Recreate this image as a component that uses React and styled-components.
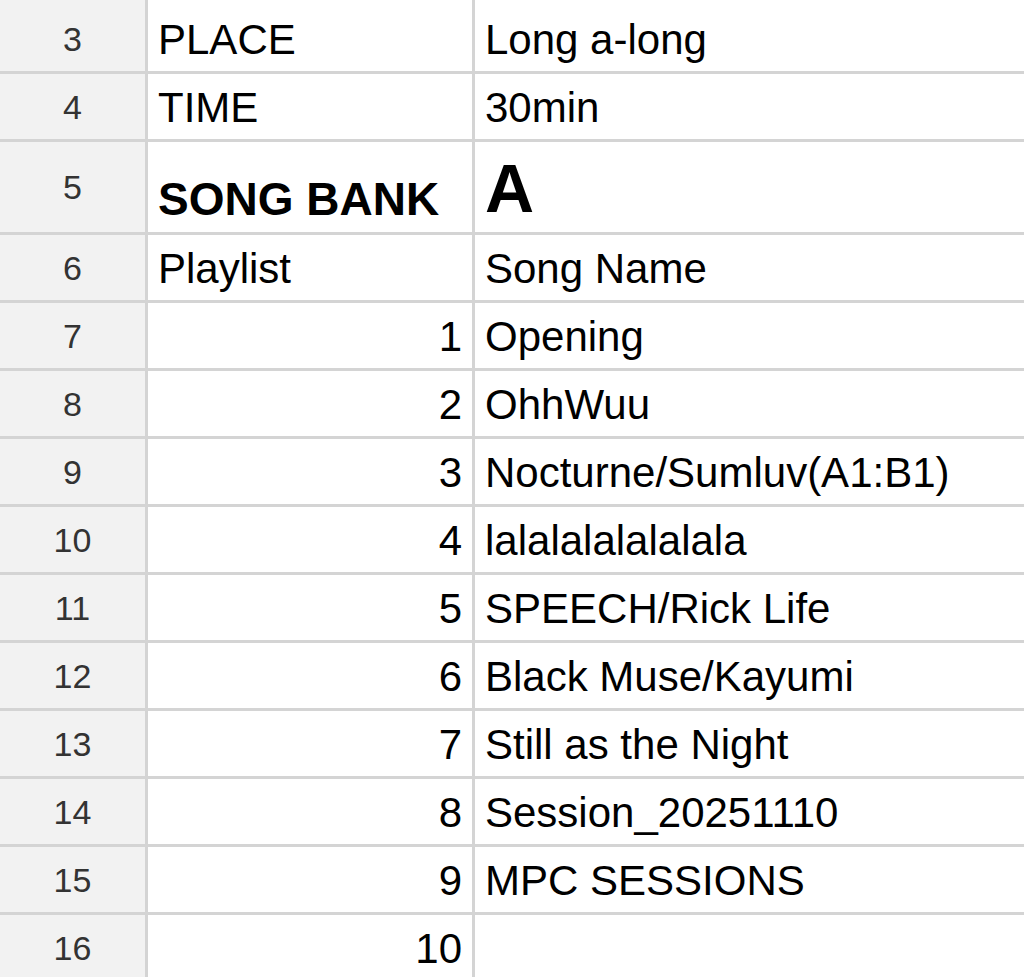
import React from 'react';
import styled, { createGlobalStyle } from 'styled-components';

// ================= style ======================= //
const GlobalStyle = createGlobalStyle`
    html, body {
        margin: 0;
        padding: 0;
        background: #ffffff;
        overflow: hidden;
    }
    body {
        font-family: "Liberation Sans", Arial, Helvetica, sans-serif;
    }
`;

const Sheet = styled.div`
    display: flex;
    flex-direction: column;
    gap: 3px;
    width: 1024px;
    height: 977px;
    overflow: hidden;
    background-color: #d4d4d4;
`;

const Row = styled.div`
    display: grid;
    grid-template-columns: 145px 324px 1fr;
    gap: 3px;
    flex: 0 0 ${(props) => props.h}px;
    height: ${(props) => props.h}px;
`;

const RowHeader = styled.div`
    display: flex;
    align-items: center;
    justify-content: center;
    background-color: #f2f2f2;
    color: #333333;
    font-size: 34px;
    line-height: 1;
`;

const Cell = styled.div`
    display: flex;
    align-items: flex-end;
    justify-content: ${(props) => props.right ? 'flex-end' : 'flex-start'};
    padding: 0 10px 10px 10px;
    background-color: #ffffff;
    color: #000000;
    font-size: ${(props) => props.size || 42}px;
    font-weight: ${(props) => props.bold ? 700 : 400};
    line-height: 1;
    white-space: nowrap;
    overflow: hidden;
`;

// ================= data ======================= //
const songs = [
    'Opening',
    'OhhWuu',
    'Nocturne/Sumluv(A1:B1)',
    'lalalalalalalala',
    'SPEECH/Rick Life',
    'Black Muse/Kayumi',
    'Still as the Night',
    'Session_20251110',
    'MPC SESSIONS',
    '',
];

// ================= component ======================= //
const App = () => {
    const renderSongs = () => {
        return songs.map((name, i) => (
            <Row h={65} key={i}>
                <RowHeader>{i + 7}</RowHeader>
                <Cell right>{i + 1}</Cell>
                <Cell>{name}</Cell>
            </Row>
        ));
    };

    return (
        <>
            <GlobalStyle />
            <Sheet>
                <Row h={3}>
                    <RowHeader />
                    <Cell />
                    <Cell />
                </Row>
                <Row h={65}>
                    <RowHeader>3</RowHeader>
                    <Cell>PLACE</Cell>
                    <Cell>Long a-long</Cell>
                </Row>
                <Row h={65}>
                    <RowHeader>4</RowHeader>
                    <Cell>TIME</Cell>
                    <Cell>30min</Cell>
                </Row>
                <Row h={90}>
                    <RowHeader>5</RowHeader>
                    <Cell bold size={46}>SONG BANK</Cell>
                    <Cell bold size={68}>A</Cell>
                </Row>
                <Row h={65}>
                    <RowHeader>6</RowHeader>
                    <Cell>Playlist</Cell>
                    <Cell>Song Name</Cell>
                </Row>
                {renderSongs()}
            </Sheet>
        </>
    );
};

export default App;
